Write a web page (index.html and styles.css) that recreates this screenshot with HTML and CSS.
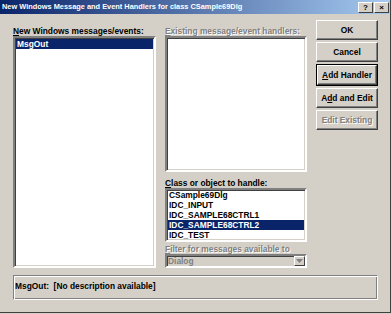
FILE: index.html
```html
<!DOCTYPE html>
<html>
<head>
<meta charset="utf-8">
<link rel="stylesheet" href="styles.css">
</head>
<body>
<div class="window">
  <div class="titlebar">
    <span class="title">New Windows Message and Event Handlers for class CSample69Dlg</span>
    <div class="tbtns"><span class="tbtn">?</span><span class="tbtn">×</span></div>
  </div>
  <div class="client">
    <div class="main">
      <div class="col left">
        <div class="label"><u>N</u>ew Windows messages/events:</div>
        <div class="listbox big">
          <div class="item sel">MsgOut</div>
        </div>
      </div>
      <div class="col mid">
        <div class="label disabled"><u>E</u>xisting message/event handlers:</div>
        <div class="listbox handlers"></div>
        <div class="label gap"><u>C</u>lass or object to handle:</div>
        <div class="listbox classes">
          <div class="item">CSample69Dlg</div>
          <div class="item">IDC_INPUT</div>
          <div class="item">IDC_SAMPLE68CTRL1</div>
          <div class="item sel">IDC_SAMPLE68CTRL2</div>
          <div class="item">IDC_TEST</div>
        </div>
        <div class="label disabled gap2"><u>F</u>ilter for messages available to</div>
        <div class="combo">
          <span class="combo-text">Dialog</span>
          <span class="combo-btn"><svg width="7" height="4" viewBox="0 0 7 4"><path d="M0 0h7L3.5 4z" fill="#808080"/></svg></span>
        </div>
      </div>
      <div class="col buttons">
        <div class="btn">OK</div>
        <div class="btn">Cancel</div>
        <div class="btn default"><span class="inner"><u>A</u>dd Handler</span></div>
        <div class="btn">A<u>d</u>d and Edit</div>
        <div class="btn disabled">Edit Existing</div>
      </div>
    </div>
    <div class="desc">MsgOut:&nbsp; [No description available]</div>
  </div>
</div>
</body>
</html>
```

FILE: styles.css
```css
* { box-sizing: border-box; }
html, body { margin: 0; padding: 0; background: #d4d0c8; }
body {
  font-family: "Liberation Sans", Arial, sans-serif;
  font-weight: bold;
  font-size: 8.4px;
  line-height: 10px;
  color: #000;
}
u { text-decoration: underline; text-underline-offset: 1px; }
.window {
  width: 391px;
  height: 313px;
  background: #d4d0c8;
  border-right: 1px solid #404040;
  border-bottom: 1px solid #404040;
  display: flex;
  flex-direction: column;
}
.titlebar {
  height: 14px;
  background: linear-gradient(to right, #0a246a, #a6caf0);
  display: flex;
  align-items: center;
  justify-content: space-between;
  padding: 0 1px 0 2px;
  color: #fff;
}
.title { font-size: 7.4px; white-space: nowrap; }
.tbtns { display: flex; gap: 1px; }
.tbtn {
  width: 15px; height: 11px;
  background: #d4d0c8;
  color: #000;
  font-size: 8px;
  line-height: 9px;
  text-align: center;
  border: 1px solid;
  border-color: #fff #404040 #404040 #fff;
}
.client {
  flex: 1;
  padding: 6px 12px 0 13px;
  display: flex;
  flex-direction: column;
}
.main { display: flex; gap: 9px; height: 248px; }
.col { display: flex; flex-direction: column; }
.left { width: 143px; padding-top: 7px; }
.mid { width: 142px; padding-top: 7px; }
.buttons { width: 62px; gap: 2px; }
.label { height: 9px; line-height: 9px; white-space: nowrap; }
.label.gap { margin-top: 7px; height: 9px; }
.label.gap2 { margin-top: 3px; }
.disabled { color: #808080; text-shadow: 1px 1px 0 #fff; }
.listbox {
  background: #fff;
  border: 2px solid;
  border-color: #808080 #fff #fff #808080;
  box-shadow: inset 1px 1px 0 #404040, inset -1px -1px 0 #d4d0c8;
  padding: 1px;
  overflow: hidden;
}
.big { height: 232px; }
.handlers { height: 137px; }
.classes { height: 54px; padding: 0 1px; }
.item { height: 10px; line-height: 10px; padding-left: 1px; white-space: nowrap; }
.classes .item { height: 10px; }
.item.sel { background: #0a246a; color: #fff; }
.combo {
  height: 14px;
  background: #d4d0c8;
  border: 2px solid;
  border-color: #808080 #fff #fff #808080;
  box-shadow: inset 1px 1px 0 #404040;
  display: flex;
  align-items: center;
  padding-left: 1px;
}
.combo-text { flex: 1; color: #808080; line-height: 10px; }
.combo-btn {
  width: 11px; height: 10px;
  border: 1px solid;
  border-color: #fff #404040 #404040 #fff;
  display: flex; align-items: center; justify-content: center;
}
.btn {
  height: 20px;
  border: 1px solid;
  border-color: #fff #404040 #404040 #fff;
  box-shadow: inset -1px -1px 0 #808080;
  display: flex;
  align-items: center;
  justify-content: center;
  white-space: nowrap;
}
.btn.default {
  border: 1px solid #000;
  box-shadow: none;
  height: 22px;
  padding: 0;
}
.btn.default .inner {
  width: 100%; height: 100%;
  border: 1px solid;
  border-color: #fff #404040 #404040 #fff;
  box-shadow: inset -1px -1px 0 #808080;
  display: flex; align-items: center; justify-content: center;
}
.desc {
  margin-top: 7px;
  height: 25px;
  border: 1px solid;
  border-color: #808080 #fff #fff #808080;
  box-shadow: inset 1px 1px 0 #fff, inset -1px -1px 0 #808080;
  padding: 5px 0 0 1px;
  line-height: 10px;
}
```
